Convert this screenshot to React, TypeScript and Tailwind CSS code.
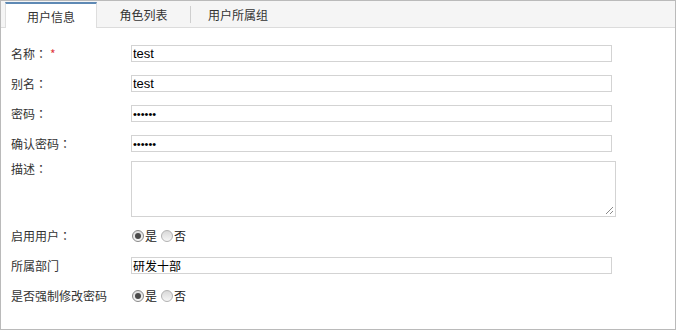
import React from "react";

function Radio({ checked }: { checked?: boolean }) {
  return (
    <span
      className={
        "inline-flex w-[12px] h-[12px] rounded-full border items-center justify-center " +
        (checked
          ? "border-[#8a8a8a] bg-gradient-to-b from-[#dedede] to-[#f4f4f4]"
          : "border-[#b2b2b2] bg-gradient-to-b from-[#d8d8d8] to-[#f6f6f6]")
      }
    >
      {checked && <span className="block w-[6px] h-[6px] rounded-full bg-[#4a4a4a]" />}
    </span>
  );
}

function RadioGroup() {
  return (
    <div className="flex items-center h-[17px] pl-[1px]">
      <Radio checked />
      <span className="ml-[1px] text-[12px] text-[#222]">是</span>
      <span className="ml-[4px] flex"><Radio /></span>
      <span className="ml-[1px] text-[12px] text-[#222]">否</span>
    </div>
  );
}

function Colon() {
  return <span className="font-['Noto_Sans_CJK_TC',sans-serif]">：</span>;
}

const inputCls =
  "w-[481px] h-[17px] border border-[#d3d3d3] bg-white px-[1px] outline-none text-black leading-[15px]";

const rowCls = "flex items-center h-[17px]";

export default function App() {
  return (
    <div className="w-[676px] h-[330px] border border-[#bababa] bg-white flex flex-col text-[12px] leading-[17px] text-[#333] font-['Noto_Sans_CJK_SC','Liberation_Sans',sans-serif]">
      <div className="h-[27px] shrink-0 bg-[#f5f5f5] border-b border-[#dcdcdc] flex items-end pl-[4px]">
        <div className="w-[92px] h-[26px] -mb-px bg-white border-t-2 border-t-[#5e89b4] border-x border-x-[#dedede] flex items-center justify-center text-[#333]">
          用户信息
        </div>
        <div className="w-[93px] h-[26px] flex items-center justify-center text-[#333]">角色列表</div>
        <div className="w-px h-[17px] bg-[#cfcfcf] self-center mt-[1px]" />
        <div className="w-[94px] h-[26px] flex items-center justify-center text-[#333]">用户所属组</div>
      </div>

      <div className="flex flex-col pl-[10px]">
        <div className={rowCls + " mt-[17px]"}>
          <div className="w-[120px]">
            名称<Colon /><span className="text-[#e0393e] ml-[3px]">*</span>
          </div>
          <input readOnly value="test" className={inputCls + " text-[13px] font-['Liberation_Sans',sans-serif]"} />
        </div>
        <div className={rowCls + " mt-[13px]"}>
          <div className="w-[120px]">别名<Colon /></div>
          <input readOnly value="test" className={inputCls + " text-[13px] font-['Liberation_Sans',sans-serif]"} />
        </div>
        <div className={rowCls + " mt-[13px]"}>
          <div className="w-[120px]">密码<Colon /></div>
          <input readOnly type="password" value="123456" className={inputCls + " text-[11px] font-['Liberation_Sans',sans-serif]"} />
        </div>
        <div className={rowCls + " mt-[13px]"}>
          <div className="w-[120px]">确认密码<Colon /></div>
          <input readOnly type="password" value="123456" className={inputCls + " text-[11px] font-['Liberation_Sans',sans-serif]"} />
        </div>
        <div className="flex items-start h-[56px] mt-[9px]">
          <div className="w-[120px] -mt-[1px]">描述<Colon /></div>
          <div className="relative w-[485px] h-[56px] border border-[#d3d3d3] bg-white">
            <svg className="absolute right-[1px] bottom-[1px]" width="9" height="9" viewBox="0 0 9 9">
              <line x1="1" y1="8" x2="8" y2="1" stroke="#8a8a8a" strokeWidth="1" />
              <line x1="5" y1="8" x2="8" y2="5" stroke="#8a8a8a" strokeWidth="1" />
            </svg>
          </div>
        </div>
        <div className={rowCls + " mt-[10px]"}>
          <div className="w-[120px]">启用用户<Colon /></div>
          <RadioGroup />
        </div>
        <div className={rowCls + " mt-[13px]"}>
          <div className="w-[120px]">所属部门</div>
          <input readOnly value="研发十部" className={inputCls + " text-[12px] font-['Noto_Sans_CJK_SC',sans-serif]"} />
        </div>
        <div className={rowCls + " mt-[13px]"}>
          <div className="w-[120px]">是否强制修改密码</div>
          <RadioGroup />
        </div>
      </div>
    </div>
  );
}
